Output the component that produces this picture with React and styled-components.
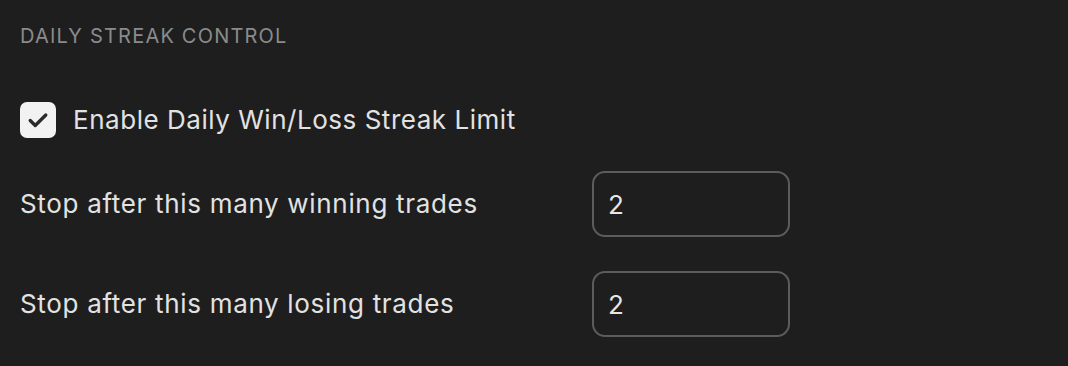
import React, { useState } from "react";
import styled, { createGlobalStyle } from "styled-components";

const GlobalStyle = createGlobalStyle`
  html, body {
    margin: 0;
    padding: 0;
    background: #1e1e1e;
  }
  body {
    font-family: Inter, "Noto Sans", sans-serif;
    -webkit-font-smoothing: antialiased;
  }
`;

const Panel = styled.section`
  padding: 24px 20px 20px 20px;
  min-height: 100vh;
  box-sizing: border-box;
  background: #1e1e1e;
  color: #e2e2e2;
`;

const Title = styled.h3`
  margin: 0;
  font-size: 20px;
  line-height: 24px;
  font-weight: 400;
  letter-spacing: 1.2px;
  color: #8b8b8b;
  text-transform: uppercase;
`;

const CheckRow = styled.label`
  display: flex;
  align-items: center;
  gap: 17px;
  margin-top: 54px;
  cursor: pointer;
  font-size: 26px;
  line-height: 36px;
  letter-spacing: 0.53px;
`;

const Box = styled.span`
  width: 36px;
  height: 36px;
  border-radius: 7px;
  background: ${({ $on }) => ($on ? "#f2f2f2" : "transparent")};
  border: ${({ $on }) => ($on ? "none" : "2px solid #5c5c5c")};
  box-sizing: border-box;
  display: flex;
  align-items: center;
  justify-content: center;
  flex-shrink: 0;
`;

const Fields = styled.div`
  display: flex;
  flex-direction: column;
  gap: 34px;
  margin-top: 33px;
`;

const Field = styled.div`
  display: grid;
  grid-template-columns: 572px 198px;
  align-items: center;
`;

const Label = styled.span`
  font-size: 26px;
  line-height: 36px;
  letter-spacing: 0.68px;
  color: #e2e2e2;
`;

const Input = styled.input`
  width: 198px;
  height: 66px;
  box-sizing: border-box;
  border: 2px solid #5c5c5c;
  border-radius: 13px;
  background: #1e1e1e;
  color: #e6e6e6;
  font-family: Inter, "Noto Sans", sans-serif;
  font-size: 26px;
  padding: 0 14px;
  outline: none;
`;

const Check = () => (
  <svg width="22" height="22" viewBox="0 0 24 24" fill="none">
    <path
      d="M3.5 12.5l5.5 5.5L20.5 6.5"
      stroke="#2a2a2a"
      strokeWidth="3.6"
      strokeLinecap="round"
      strokeLinejoin="round"
    />
  </svg>
);

export default function App() {
  const [enabled, setEnabled] = useState(true);
  const [wins, setWins] = useState("2");
  const [losses, setLosses] = useState("2");

  return (
    <>
      <GlobalStyle />
      <Panel>
        <Title>Daily Streak Control</Title>
        <CheckRow onClick={() => setEnabled(!enabled)}>
          <Box $on={enabled}>{enabled && <Check />}</Box>
          Enable Daily Win/Loss Streak Limit
        </CheckRow>
        <Fields>
          <Field>
            <Label>Stop after this many winning trades</Label>
            <Input value={wins} onChange={(e) => setWins(e.target.value)} />
          </Field>
          <Field>
            <Label>Stop after this many losing trades</Label>
            <Input value={losses} onChange={(e) => setLosses(e.target.value)} />
          </Field>
        </Fields>
      </Panel>
    </>
  );
}
